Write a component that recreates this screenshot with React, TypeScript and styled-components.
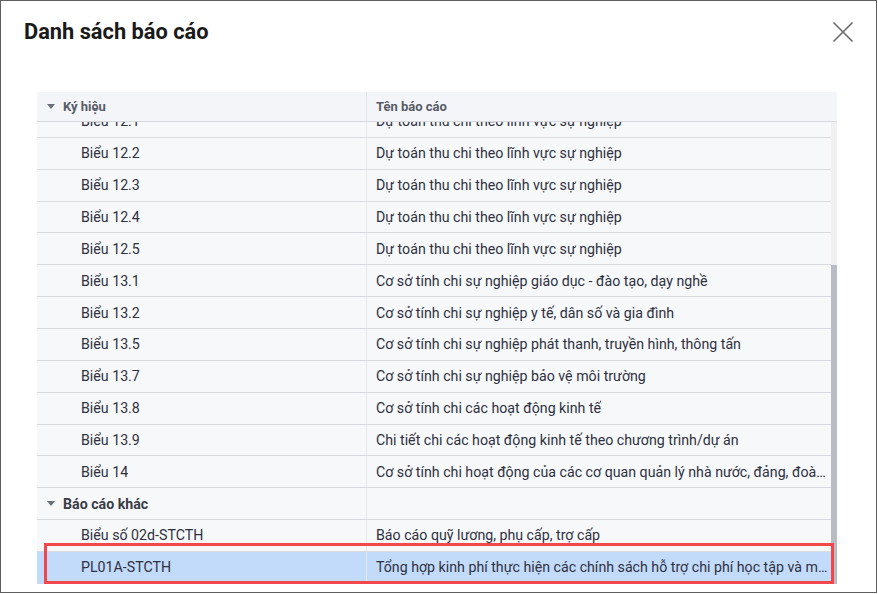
import React, { useEffect, useRef, useState } from 'react';
import styled, { createGlobalStyle } from 'styled-components';

const GlobalStyle = createGlobalStyle`
  html, body {
    margin: 0;
    padding: 0;
    background: #fff;
  }
  body {
    font-family: Roboto, "Noto Sans", "Liberation Sans", sans-serif;
  }
`;

const ROW_H = 31.85;

const Dialog = styled.div`
  box-sizing: border-box;
  width: 877px;
  height: 593px;
  border: 1px solid #5e5e5e;
  background: #fff;
  display: flex;
  flex-direction: column;
  padding: 0 39px 8px 36px;
`;

const TitleBar = styled.div`
  display: flex;
  align-items: center;
  justify-content: space-between;
  height: 60px;
  margin: 0 -17px 31px -13px;
`;

const Title = styled.h1`
  margin: 0;
  font-size: 21.8px;
  font-weight: 700;
  color: #1a1a1a;
`;

const CloseButton = styled.button`
  border: 0;
  background: transparent;
  padding: 0;
  width: 22px;
  height: 22px;
  display: flex;
  cursor: pointer;
  margin-top: 2px;
`;

const Table = styled.div`
  position: relative;
  flex: 1;
  display: flex;
  flex-direction: column;
  min-height: 0;
`;

const HeaderRow = styled.div`
  display: grid;
  grid-template-columns: 329px 1fr;
  height: 30px;
  flex-shrink: 0;
  background: #f4f5f8;
  border-bottom: 1px solid #d6d8de;
  box-sizing: border-box;
`;

const HeaderCell = styled.div<{ $first?: boolean }>`
  display: flex;
  align-items: center;
  gap: 8px;
  padding-left: ${(p) => (p.$first ? '10px' : '9px')};
  font-size: 13px;
  font-weight: 700;
  color: #575c66;
  border-left: ${(p) => (p.$first ? '0' : '1px solid #e1e3e8')};
`;

const Caret = styled.span`
  width: 0;
  height: 0;
  border-left: 4.5px solid transparent;
  border-right: 4.5px solid transparent;
  border-top: 5px solid #6b6f78;
`;

const Body = styled.div`
  flex: 1;
  display: flex;
  min-height: 0;
`;

const Viewport = styled.div`
  flex: 1;
  min-width: 0;
  overflow: hidden;
`;

const ScrollTrack = styled.div`
  width: 6px;
  flex-shrink: 0;
  background: #f0f0f0;
  display: flex;
  flex-direction: column;
  justify-content: flex-end;
`;

const ScrollThumb = styled.div`
  width: 100%;
  background: #b8bdc4;
`;

const Row = styled.div<{ $selected?: boolean }>`
  display: grid;
  grid-template-columns: 329px 1fr;
  height: ${ROW_H}px;
  box-sizing: border-box;
  background: ${(p) => (p.$selected ? '#c3dbfb' : '#f7f8fa')};
  border-bottom: 1px solid ${(p) => (p.$selected ? '#c3dbfb' : '#d9dbe1')};
`;

const Cell = styled.div<{ $indent: number; $bold?: boolean; $divider?: boolean }>`
  display: flex;
  align-items: center;
  gap: 8px;
  min-width: 0;
  padding-left: ${(p) => p.$indent}px;
  padding-right: 2px;
  font-size: 14.2px;
  font-weight: ${(p) => (p.$bold ? 700 : 400)};
  color: ${(p) => (p.$bold ? '#3a3d46' : '#2e3140')};
  border-left: ${(p) => (p.$divider ? '1px solid #e6e8ec' : '0')};
`;

const CellText = styled.span`
  white-space: nowrap;
  overflow: hidden;
  text-overflow: ellipsis;
`;

const Highlight = styled.div`
  position: absolute;
  left: 7px;
  right: 3px;
  bottom: 0;
  height: 41px;
  box-sizing: border-box;
  border: 3px solid #f2474c;
  pointer-events: none;
`;

type Item = { code: string; name: string; group?: boolean; selected?: boolean };

const items: Item[] = [
  { code: 'Biểu 11.1', name: 'Dự toán chi thường xuyên' },
  { code: 'Biểu 11.2', name: 'Dự toán chi thường xuyên' },
  { code: 'Biểu 11.3', name: 'Dự toán chi thường xuyên' },
  { code: 'Biểu 11.4', name: 'Dự toán chi thường xuyên' },
  { code: 'Biểu 11.5', name: 'Dự toán chi thường xuyên' },
  { code: 'Biểu 12', name: 'Dự toán thu chi theo lĩnh vực sự nghiệp' },
  { code: 'Biểu 12.1', name: 'Dự toán thu chi theo lĩnh vực sự nghiệp' },
  { code: 'Biểu 12.2', name: 'Dự toán thu chi theo lĩnh vực sự nghiệp' },
  { code: 'Biểu 12.3', name: 'Dự toán thu chi theo lĩnh vực sự nghiệp' },
  { code: 'Biểu 12.4', name: 'Dự toán thu chi theo lĩnh vực sự nghiệp' },
  { code: 'Biểu 12.5', name: 'Dự toán thu chi theo lĩnh vực sự nghiệp' },
  { code: 'Biểu 13.1', name: 'Cơ sở tính chi sự nghiệp giáo dục - đào tạo, dạy nghề' },
  { code: 'Biểu 13.2', name: 'Cơ sở tính chi sự nghiệp y tế, dân số và gia đình' },
  { code: 'Biểu 13.5', name: 'Cơ sở tính chi sự nghiệp phát thanh, truyền hình, thông tấn' },
  { code: 'Biểu 13.7', name: 'Cơ sở tính chi sự nghiệp bảo vệ môi trường' },
  { code: 'Biểu 13.8', name: 'Cơ sở tính chi các hoạt động kinh tế' },
  { code: 'Biểu 13.9', name: 'Chi tiết chi các hoạt động kinh tế theo chương trình/dự án' },
  {
    code: 'Biểu 14',
    name: 'Cơ sở tính chi hoạt động của các cơ quan quản lý nhà nước, đảng, đoàn thể',
  },
  { code: 'Báo cáo khác', name: '', group: true },
  { code: 'Biểu số 02d-STCTH', name: 'Báo cáo quỹ lương, phụ cấp, trợ cấp' },
  {
    code: 'PL01A-STCTH',
    name: 'Tổng hợp kinh phí thực hiện các chính sách hỗ trợ chi phí học tập và miễn giảm học phí',
    selected: true,
  },
];

const CloseIcon = () => (
  <svg width="22" height="22" viewBox="0 0 22 22">
    <path d="M1.5 1.5 L20.5 20.5 M20.5 1.5 L1.5 20.5" stroke="#6a6a6a" strokeWidth="1.6" fill="none" />
  </svg>
);

const App: React.FC = () => {
  const viewportRef = useRef<HTMLDivElement>(null);
  const [thumb, setThumb] = useState(0);

  useEffect(() => {
    const el = viewportRef.current;
    if (!el) return;
    el.scrollTop = el.scrollHeight;
    setThumb((el.clientHeight / el.scrollHeight) * el.clientHeight);
  }, []);

  return (
    <>
      <GlobalStyle />
      <Dialog>
        <TitleBar>
          <Title>Danh sách báo cáo</Title>
          <CloseButton aria-label="Đóng">
            <CloseIcon />
          </CloseButton>
        </TitleBar>

        <Table>
          <HeaderRow>
            <HeaderCell $first>
              <Caret />
              Ký hiệu
            </HeaderCell>
            <HeaderCell>Tên báo cáo</HeaderCell>
          </HeaderRow>

          <Body>
            <Viewport ref={viewportRef}>
              {items.map((item) => (
                <Row key={item.code} $selected={item.selected}>
                  <Cell $indent={item.group ? 10 : 44} $bold={item.group}>
                    {item.group && <Caret />}
                    <CellText>{item.code}</CellText>
                  </Cell>
                  <Cell $indent={9} $divider>
                    <CellText>{item.name}</CellText>
                  </Cell>
                </Row>
              ))}
            </Viewport>
            <ScrollTrack>
              <ScrollThumb style={{ height: thumb }} />
            </ScrollTrack>
          </Body>

          <Highlight />
        </Table>
      </Dialog>
    </>
  );
};

export default App;
